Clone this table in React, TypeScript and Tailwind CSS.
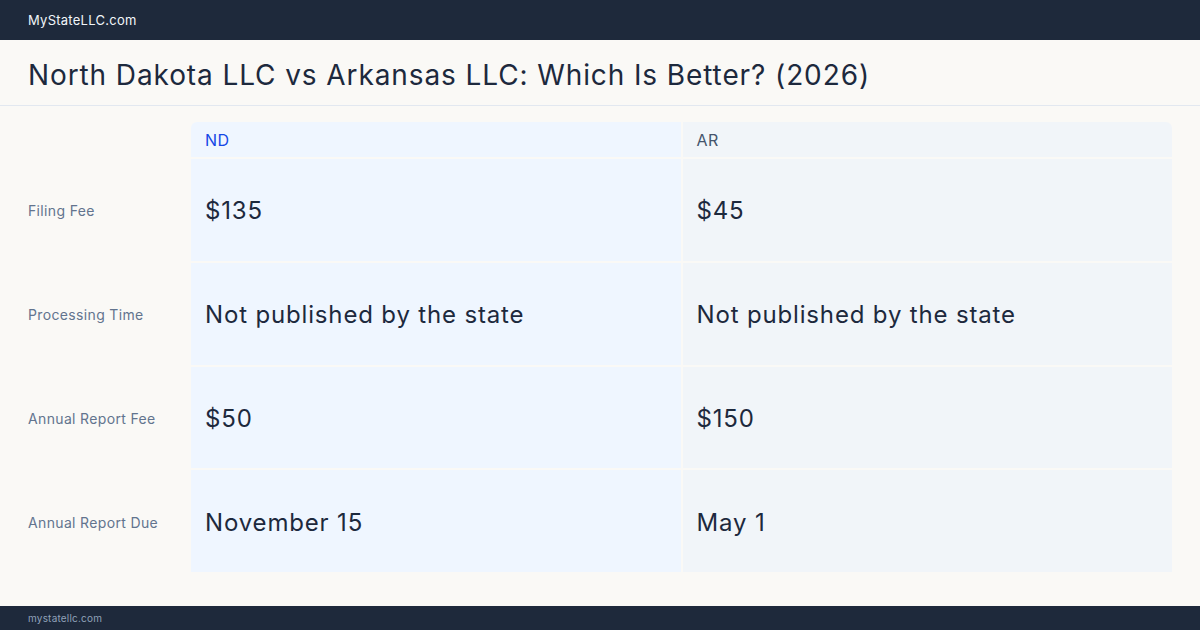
const rows = [
  { label: 'Filing Fee', nd: '$135', ar: '$45' },
  { label: 'Processing Time', nd: 'Not published by the state', ar: 'Not published by the state' },
  { label: 'Annual Report Fee', nd: '$50', ar: '$150' },
  { label: 'Annual Report Due', nd: 'November 15', ar: 'May 1' },
]

export default function App() {
  return (
    <div
      className="w-[1200px] h-[630px] flex flex-col bg-[#faf9f6] text-slate-800 overflow-hidden"
      style={{ fontFamily: 'Inter, "Noto Sans", sans-serif' }}
    >
      <div className="h-10 shrink-0 bg-[#1e293b] flex items-center px-7 pt-[2px]">
        <span className="text-[13px] text-slate-100 tracking-[0.02em]">MyStateLLC.com</span>
      </div>

      <div className="h-[66px] shrink-0 flex items-center px-7 pt-[4px] border-b border-slate-200">
        <h1 className="text-[28px] leading-none text-slate-800 tracking-[0.032em]">
          North Dakota LLC vs Arkansas LLC: Which Is Better? (2026)
        </h1>
      </div>

      <div className="flex-1 px-7 pt-[16px]">
        <div className="h-[450px] grid grid-cols-[161px_1fr_1fr] grid-rows-[35px_1fr_1fr_1fr_1fr] gap-[2px]">
          <div />
          <div className="bg-blue-50 rounded-tl-md flex items-center px-[14px] text-base text-blue-700 tracking-[0.03em]">
            ND
          </div>
          <div className="bg-slate-100 rounded-tr-md flex items-center px-[14px] text-base text-slate-600 tracking-[0.03em]">
            AR
          </div>
          {rows.map((r) => (
            <>
              <div key={r.label + 'l'} className="flex items-center pt-[3px] text-sm text-slate-500 tracking-[0.025em]">
                {r.label}
              </div>
              <div key={r.label + 'n'} className="bg-blue-50 flex items-center px-[14px] pt-[3px] text-2xl text-slate-800 tracking-[0.035em]">
                {r.nd}
              </div>
              <div key={r.label + 'a'} className="bg-slate-100 flex items-center px-[14px] pt-[3px] text-2xl text-slate-800 tracking-[0.035em]">
                {r.ar}
              </div>
            </>
          ))}
        </div>
      </div>

      <div className="h-6 shrink-0 bg-[#1e293b] flex items-center px-7">
        <span className="text-[10px] text-slate-400 tracking-[0.02em]">mystatellc.com</span>
      </div>
    </div>
  )
}
